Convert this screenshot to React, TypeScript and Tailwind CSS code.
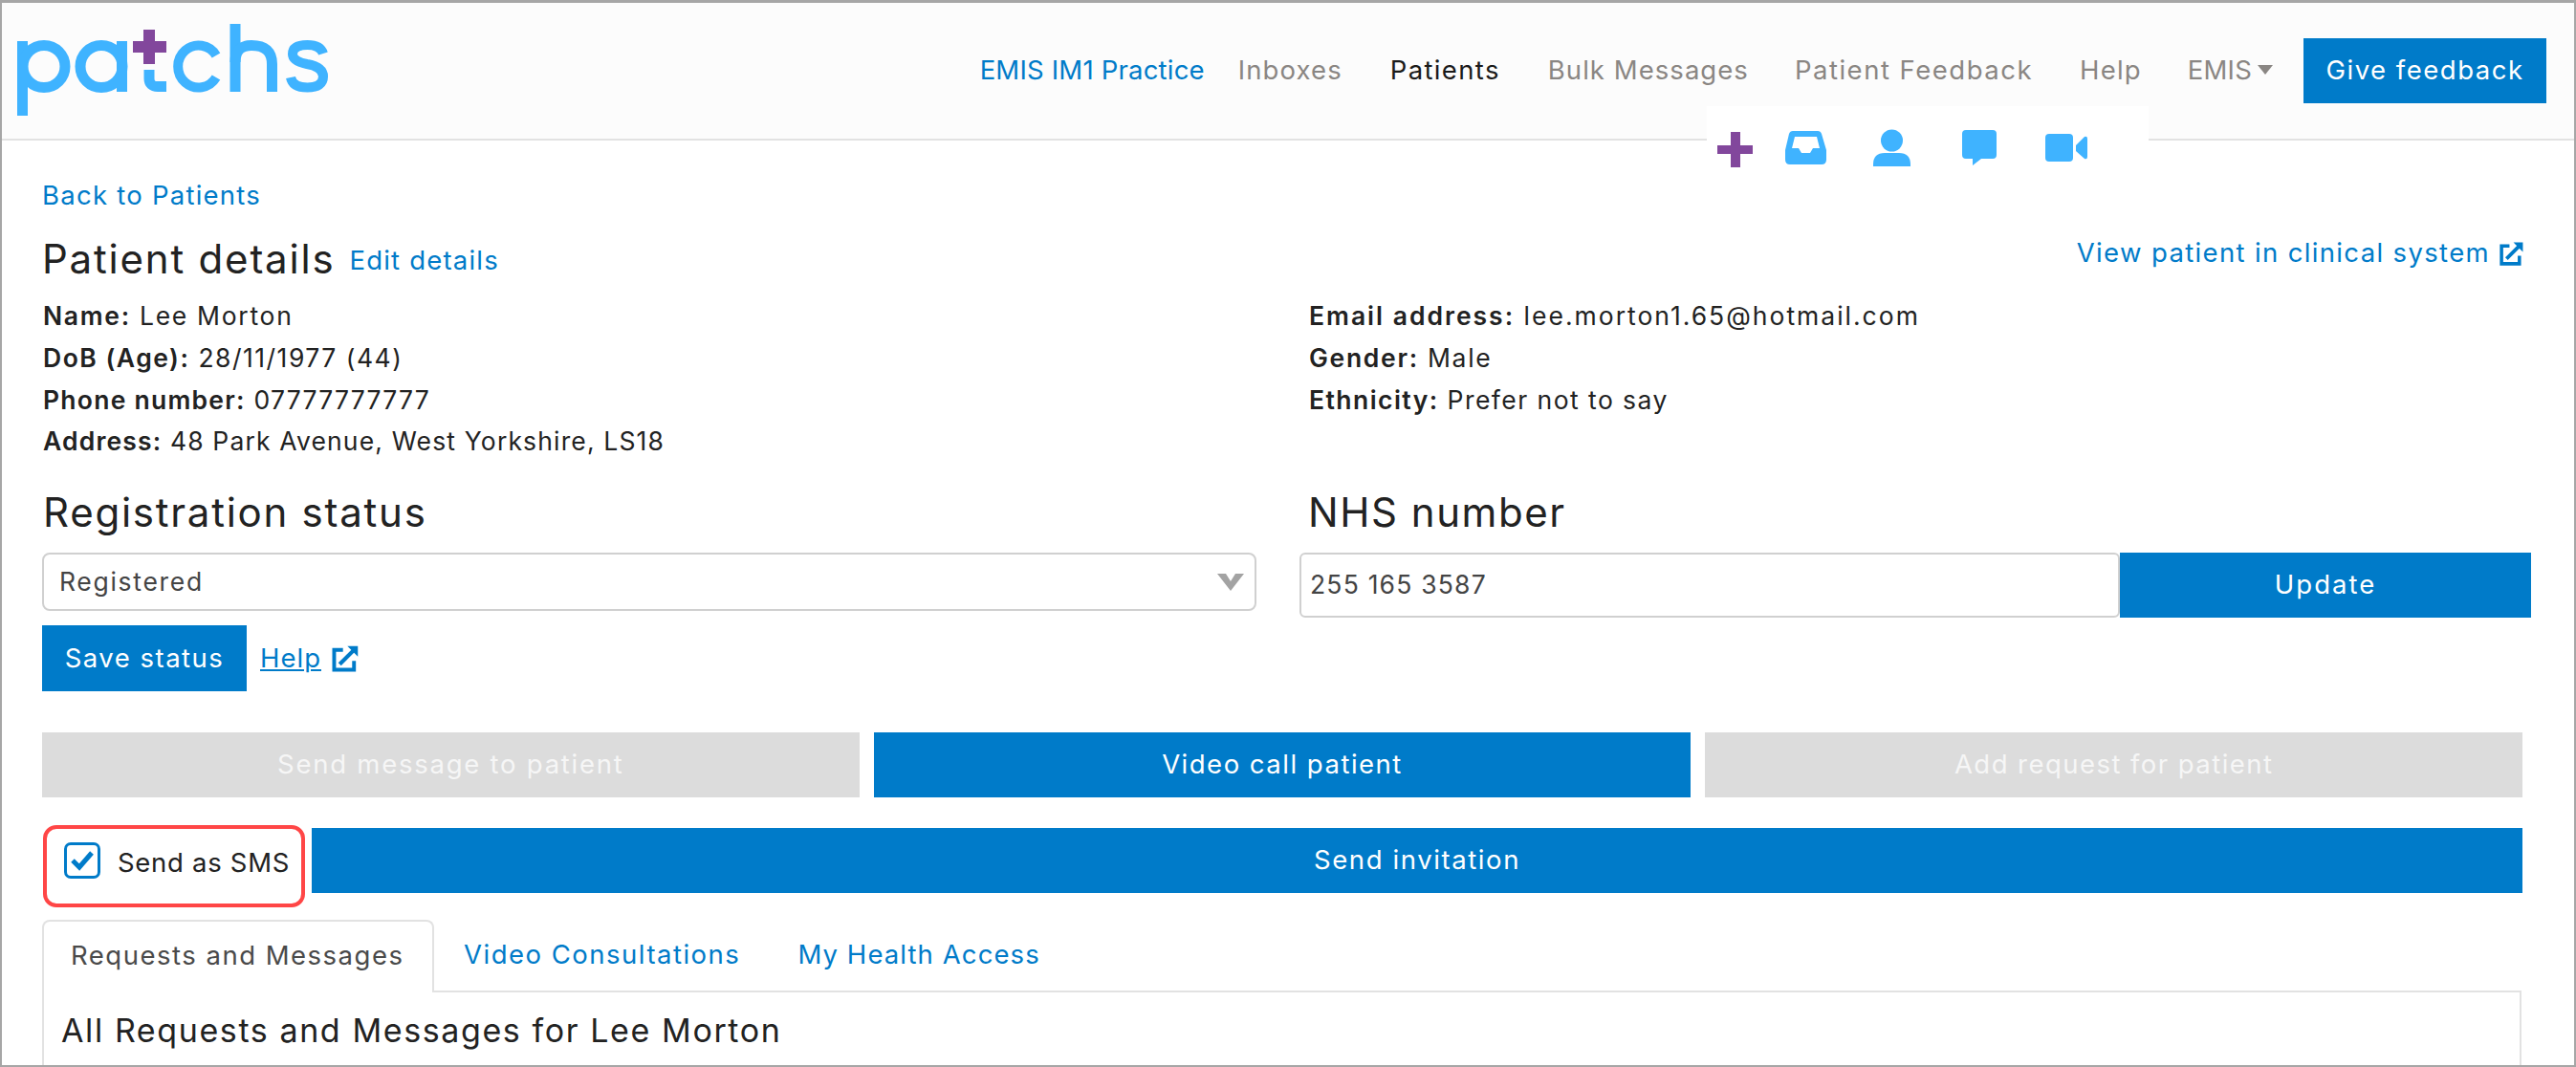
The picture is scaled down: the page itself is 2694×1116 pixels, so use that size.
const F = "[font-family:Inter,'Liberation_Sans',sans-serif]";

function Logo() {
  return (
    <svg width="330" height="100" viewBox="15 25 330 100" fill="none" className="shrink-0">
      <g stroke="#3fb3ff" strokeWidth="11">
        <path d="M24.5 122V44" />
        <circle cx="47" cy="70.5" r="22" />
        <circle cx="107" cy="70.5" r="22" />
        <path d="M128.5 44V97" />
        <path d="M157 74V83Q157 91.5 166 91.5H175" />
        <path d="M227 59A21.5 22 0 1 0 227 82" strokeWidth="10" />
        <path d="M247 26V97" />
        <path d="M247 66Q247 48.5 264 48.5Q285.5 48.5 285.5 68V97" />
        <path d="M339 57Q336 48 322.5 48Q307 48 307 57.5Q307 65 322 68Q339 71 339 81Q339 92.5 322.5 92.5Q307 92.5 305 82" strokeWidth="10" />
      </g>
      <path d="M151 32H163V44H175V56H163V68H151V56H140V44H151Z" fill="#82479c" />
    </svg>
  );
}

function ExtLink({ size = 26 }: { size?: number }) {
  return (
    <svg width={size} height={size} viewBox="0 0 26 26" fill="none" stroke="#007bc9" className="inline-block shrink-0">
      <path d="M11 5H3V23H21V15" strokeWidth="3.4" />
      <path d="M8 18L22 4" strokeWidth="3.6" />
      <path d="M15 1.5H24.5V11Z" fill="#007bc9" strokeWidth="0" />
    </svg>
  );
}

function NavLink({ children, c = "text-[#8a8683]", cls = "" }: { children: React.ReactNode; c?: string; cls?: string }) {
  return <span className={`${c} ${cls} whitespace-nowrap`}>{children}</span>;
}

function Field({ k, v, t = "" }: { k: string; v: string; t?: string }) {
  return (
    <div className={`h-[44px] leading-[44px] text-[#222] text-[26.5px] whitespace-nowrap ${t}`}>
      <b className="font-semibold">{k}</b> {v}
    </div>
  );
}

function Btn({ children, cls = "" }: { children: React.ReactNode; cls?: string }) {
  return <div className={`flex items-center justify-center bg-[#007bc9] text-white text-[27.5px] ${cls}`}>{children}</div>;
}

export default function App() {
  return (
    <div className={`${F} relative w-[2694px] h-[1116px] overflow-hidden bg-white border-x-2 border-t-[3px] border-b-2 border-[#a6a6a6] flex flex-col`}>
      <header className="h-[144px] shrink-0 bg-[#fcfcfc] border-b-2 border-[#e2e2e2] flex items-center pl-[12px] pr-[29px] text-[27.5px]">
        <div><Logo /></div>
        <nav className="ml-auto flex items-center -mt-[3px]">
          <NavLink c="text-[#007bc9]" cls="mr-[35px] tracking-[0.2px] mt-[2px]">EMIS IM1 Practice</NavLink>
          <NavLink cls="mr-[50px] tracking-[1.1px] mt-[2px]">Inboxes</NavLink>
          <NavLink c="text-[#1a1a1a]" cls="mr-[50px] tracking-[1.35px] mt-[2px]">Patients</NavLink>
          <NavLink cls="mr-[48px] tracking-[1.05px] mt-[2px]">Bulk Messages</NavLink>
          <NavLink cls="mr-[49px] tracking-[1.5px] mt-[2px]">Patient Feedback</NavLink>
          <NavLink cls="mr-[48px] tracking-[1.2px] mt-[2px]">Help</NavLink>
          <NavLink cls="mr-[4px] mt-[2px] tracking-[0.2px]">EMIS</NavLink>
          <span className="ml-[2px] w-0 h-0 border-x-[8.5px] border-x-transparent border-t-[10px] border-t-[#8a8683] mr-[32px]" />
          <Btn cls="w-[254px] h-[68px] mt-[3px] tracking-[1.5px]">Give feedback</Btn>
        </nav>
      </header>

      {/* floating shortcut strip */}
      <div className="absolute left-[1783px] top-[108px] w-[462px] h-[80px] bg-white">
        <svg width="462" height="80" viewBox="1785 111 462 80">
          <path d="M1810 138H1820V152H1833V161H1820V175H1810V161H1796V152H1810Z" fill="#82479c" />
          <path fillRule="evenodd" fill="#3fb3ff" d="M1875 137H1901Q1904 137 1905 140L1910 157V167Q1910 172 1905 172H1872Q1867 172 1867 167V157L1871 140Q1872 137 1875 137ZM1877 143L1874 155H1881L1884 160H1893L1896 155H1903L1900 143Z" />
          <circle cx="1978.5" cy="147" r="11.5" fill="#3fb3ff" />
          <path d="M1959 174V172Q1959 160 1971 160H1986Q1998 160 1998 172V174Z" fill="#3fb3ff" />
          <path d="M2056 136H2084Q2088 136 2088 140V162Q2088 166 2084 166H2072L2063 173V166H2056Q2052 166 2052 162V140Q2052 136 2056 136Z" fill="#3fb3ff" />
          <rect x="2139" y="140" width="29" height="29" rx="4" fill="#3fb3ff" />
          <path d="M2171 152L2180 143Q2183 142 2183 145V164Q2183 167 2180 166L2171 158Z" fill="#3fb3ff" />
        </svg>
      </div>

      <main className="flex-1 pl-[42px] pr-[52px] flex flex-col min-h-0">
        <a className="mt-[35px] h-[44px] leading-[44px] text-[27.5px] text-[#007bc9] tracking-[1.25px]">Back to Patients</a>
        <div className="h-[48px] mt-[18px] flex items-center">
          <span className="text-[42px] text-[#222] tracking-[1.8px] mt-[4px]">Patient details</span>
          <span className="ml-[15px] mt-[10px] text-[27.5px] text-[#007bc9] tracking-[1.2px]">Edit details</span>
          <span className="ml-auto -mt-[6px] flex items-center gap-[9px] text-[27.5px] text-[#007bc9] tracking-[1.35px]">View patient in clinical system <ExtLink size={27} /></span>
        </div>
        <div className="mt-[16px] grid grid-cols-[1324px_1fr] h-[176px] pl-[1px]">
          <div>
            <Field k="Name:" v="Lee Morton" t="tracking-[1.7px]" />
            <Field k="DoB (Age):" v="28/11/1977 (44)" t="tracking-[1.5px]" />
            <Field k="Phone number:" v="07777777777" t="tracking-[1.25px]" />
            <Field k="Address:" v="48 Park Avenue, West Yorkshire, LS18" t="tracking-[1.15px] -mt-[1px]" />
          </div>
          <div>
            <Field k="Email address:" v="lee.morton1.65@hotmail.com" t="tracking-[2px]" />
            <Field k="Gender:" v="Male" t="tracking-[1.7px]" />
            <Field k="Ethnicity:" v="Prefer not to say" t="tracking-[1.45px]" />
          </div>
        </div>
        <div className="mt-[27px] grid grid-cols-[1270px_1288px] gap-x-[45px]">
          <div>
            <div className="h-[48px] leading-[50px] text-[42px] text-[#222] pl-[1px] tracking-[1.75px]">Registration status</div>
            <div className="mt-[19px] h-[61px] border-2 border-[#d0d0d0] rounded-[8px] bg-white flex items-center justify-between pl-[16px] pr-[11px] text-[26.5px] text-[#444] tracking-[1.7px]">
              Registered
              <svg width="28" height="18" viewBox="0 0 28 18"><path d="M0 0H9L14 8L19 0H28L14 18Z" fill="#a3a3a3" /></svg>
            </div>
            <div className="mt-[15px] flex items-center">
              <Btn cls="w-[214px] h-[69px] tracking-[1.5px]">Save status</Btn>
              <span className="ml-[14px] flex items-center gap-[10px] text-[27.5px] text-[#007bc9] tracking-[1px]"><span className="underline">Help</span><ExtLink size={30} /></span>
            </div>
          </div>
          <div>
            <div className="h-[48px] leading-[50px] text-[42px] text-[#222] pl-[9px] tracking-[1.55px]">NHS number</div>
            <div className="mt-[19px] flex h-[68px]">
              <div className="flex-1 border-2 border-[#d0d0d0] rounded-[6px] flex items-center pl-[9px] text-[26.5px] text-[#444] tracking-[1.2px]">255 165 3587</div>
              <Btn cls="w-[430px] tracking-[2px]">Update</Btn>
            </div>
          </div>
        </div>
        <div className="mt-[43px] w-[2594px] grid grid-cols-3 gap-x-[15px] h-[68px] text-[27.5px]">
          <div className="bg-[#dcdcdc] text-[#f6f6f6] flex items-center justify-center tracking-[1.75px]">Send message to patient</div>
          <Btn cls="tracking-[1.5px]">Video call patient</Btn>
          <div className="bg-[#dcdcdc] text-[#f6f6f6] flex items-center justify-center tracking-[1.45px]">Add request for patient</div>
        </div>
        <div className="mt-[29px] w-[2594px] flex items-start">
          <div className="w-[274px] h-[86px] border-[4px] border-[#ff4646] rounded-[14px] flex items-start ml-[1px] pl-[18px] pt-[14px] shrink-0">
            <span className="w-[38px] h-[38px] rounded-[7px] border-[3px] border-[#007bc9] flex items-center justify-center shrink-0">
              <svg width="26" height="24" viewBox="0 0 26 24"><path d="M3 12L10 19L23 4" fill="none" stroke="#007bc9" strokeWidth="5" /></svg>
            </span>
            <span className="ml-[18px] mt-[1px] text-[27.5px] text-[#222] whitespace-nowrap tracking-[0.7px]">Send as SMS</span>
          </div>
          <Btn cls="flex-1 ml-[7px] mt-[3px] h-[68px] tracking-[1.6px]">Send invitation</Btn>
        </div>
        <div className="mt-[13px] w-[2593px] h-[76px] flex items-end relative z-10">
          <div className="w-[410px] h-[76px] pb-[2px] bg-white border-2 border-b-0 border-[#e2e2e2] rounded-t-[8px] flex items-center pl-[28px] text-[27.5px] text-[#4a4a4a] tracking-[1.5px]">Requests and Messages</div>
          <div className="h-[76px] pb-[2px] flex items-center pl-[31px] text-[27.5px] text-[#007bc9] tracking-[1.5px]">Video Consultations</div>
          <div className="h-[76px] pb-[2px] flex items-center pl-[60px] text-[27.5px] text-[#007bc9] tracking-[1.1px]">My Health Access</div>
        </div>
        <div className="-mt-[2px] w-[2593px] flex-1 border-x-2 border-t-2 border-[#e2e2e2] pl-[18px] pt-[16px]">
          <div className="h-[48px] leading-[48px] text-[34px] text-[#222] tracking-[1.6px]">All Requests and Messages for Lee Morton</div>
        </div>
      </main>
    </div>
  );
}
